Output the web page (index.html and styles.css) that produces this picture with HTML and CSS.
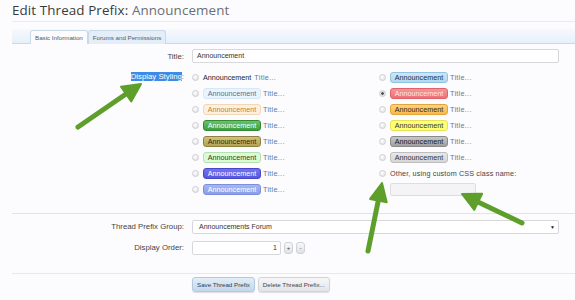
FILE: index.html
```html
<!DOCTYPE html>
<html>
<head>
<meta charset="utf-8">
<title>Edit Thread Prefix</title>
<link rel="stylesheet" href="styles.css">
</head>
<body>
<div class="page">
  <h1 class="heading">Edit Thread Prefix: <span class="heading-sub">Announcement</span></h1>
  <div class="tabs">
    <span class="tab tab-active">Basic Information</span>
    <span class="tab">Forums and Permissions</span>
  </div>
  <div class="form">
    <div class="row row-title">
      <div class="lbl">Title:</div>
      <div class="input input-wide">Announcement</div>
    </div>
    <div class="row row-styles">
      <div class="lbl lbl-top"><span class="selected">Display Styling</span><span class="colon">:</span></div>
      <div class="styles">
        <div class="col">
          <div class="opt"><span class="radio"></span><span class="plain">Announcement</span><span class="ttl">Title...</span></div>
          <div class="opt"><span class="radio"></span><span class="pill p-primary">Announcement</span><span class="ttl">Title...</span></div>
          <div class="opt"><span class="radio"></span><span class="pill p-secondary">Announcement</span><span class="ttl">Title...</span></div>
          <div class="opt"><span class="radio"></span><span class="pill p-green">Announcement</span><span class="ttl">Title...</span></div>
          <div class="opt"><span class="radio"></span><span class="pill p-olive">Announcement</span><span class="ttl">Title...</span></div>
          <div class="opt"><span class="radio"></span><span class="pill p-lightgreen">Announcement</span><span class="ttl">Title...</span></div>
          <div class="opt"><span class="radio"></span><span class="pill p-royal">Announcement</span><span class="ttl">Title...</span></div>
          <div class="opt"><span class="radio"></span><span class="pill p-skyblue">Announcement</span><span class="ttl">Title...</span></div>
        </div>
        <div class="col">
          <div class="opt"><span class="radio"></span><span class="pill p-blue">Announcement</span><span class="ttl">Title...</span></div>
          <div class="opt"><span class="radio radio-on"></span><span class="pill p-red">Announcement</span><span class="ttl">Title...</span></div>
          <div class="opt"><span class="radio"></span><span class="pill p-orange">Announcement</span><span class="ttl">Title...</span></div>
          <div class="opt"><span class="radio"></span><span class="pill p-yellow">Announcement</span><span class="ttl">Title...</span></div>
          <div class="opt"><span class="radio"></span><span class="pill p-gray">Announcement</span><span class="ttl">Title...</span></div>
          <div class="opt"><span class="radio"></span><span class="pill p-silver">Announcement</span><span class="ttl">Title...</span></div>
          <div class="opt"><span class="radio"></span><span class="other">Other, using custom CSS class name:</span></div>
          <div class="opt opt-input"><span class="input input-css"></span></div>
        </div>
      </div>
    </div>
    <div class="sep"></div>
    <div class="row row-group">
      <div class="lbl">Thread Prefix Group:</div>
      <div class="input input-wide select">Announcements Forum<span class="caret">&#9660;</span></div>
    </div>
    <div class="row row-order">
      <div class="lbl">Display Order:</div>
      <div class="spin">
        <span class="input input-num">1</span>
        <span class="spin-btn">+</span>
        <span class="spin-btn">-</span>
      </div>
    </div>
    <div class="sep sep-bottom"></div>
    <div class="row row-buttons">
      <div class="lbl"></div>
      <div class="buttons">
        <span class="btn btn-primary">Save Thread Prefix</span>
        <span class="btn">Delete Thread Prefix...</span>
      </div>
    </div>
  </div>
  <svg class="arrows" width="575" height="300" viewBox="0 0 575 300">
    <g fill="#5e9f2c" stroke="#5e9f2c" stroke-linecap="round" stroke-linejoin="round">
      <line x1="78" y1="127" x2="126" y2="94" stroke-width="5"/>
      <polygon points="141,84 121,86.7 131.2,101.5" stroke-width="2"/>
      <line x1="368" y1="251" x2="378.4" y2="200" stroke-width="5"/>
      <polygon points="382,183 370.1,198.9 386.7,202.3" stroke-width="2"/>
      <line x1="522" y1="223" x2="478" y2="202" stroke-width="5"/>
      <polygon points="462,194 482.1,193.7 474.3,209.9" stroke-width="2"/>
    </g>
  </svg>
</div>
</body>
</html>
```

FILE: styles.css
```css
* { box-sizing: border-box; }
html, body { margin: 0; padding: 0; }
body {
  background: #fcfcfe;
  font-family: "Liberation Sans", Arial, sans-serif;
  color: #333;
  width: 575px;
  height: 300px;
  overflow: hidden;
}
.page { position: relative; width: 575px; height: 300px; }

.heading {
  margin: 0 0 0 12px;
  height: 22px;
  padding: 1px 0 0 0;
  font-family: "Open Sans", "Noto Sans", sans-serif;
  font-weight: normal;
  font-size: 13.4px;
  line-height: 18px;
  color: #3a3a3a;
  border-bottom: 1px solid #e9ebf0;
  letter-spacing: 0.1px;
}
.heading-sub { color: #6b6f75; }

.tabs {
  margin: 7px 0 0 12px;
  height: 15px;
  padding: 1px 0 0 18px;
  background: linear-gradient(#f6f9fd, #e6f0fa);
  border-bottom: 1px solid #c9d9ea;
  display: flex;
  align-items: flex-end;
}
.tab {
  height: 14px;
  margin-bottom: -1px;
  padding: 0 4px;
  font-size: 6.2px;
  line-height: 13px;
  white-space: nowrap;
  color: #505862;
  border: 1px solid #c9d9ea;
  border-bottom: none;
  border-radius: 3px 3px 0 0;
  background: #e4eef9;
}
.tab-active { background: #fcfcfe; padding: 0 4px; }

.form { padding-left: 12px; }
.row {
  display: grid;
  grid-template-columns: 172px 1fr;
  column-gap: 8px;
  align-items: center;
  font-size: 7.8px;
}
.lbl { text-align: right; color: #444; }
.lbl-top { align-self: start; line-height: 16px; }
.row-title { margin-top: 5px; }
.input {
  height: 14px;
  border: 1px solid #d8d8dc;
  border-radius: 2px;
  background: #fff;
  font-size: 7px;
  line-height: 12px;
  padding: 0 4px;
  color: #333;
}
.input-wide { width: 367px; }
.select { position: relative; padding-left: 6px; }
.caret { position: absolute; right: 3px; top: 0; font-size: 5px; color: #222; }

.selected { background: #3d8be6; color: #fff; }
.colon { color: #3d6fb0; }

.row-styles { margin-top: 6px; }
.styles { display: grid; grid-template-columns: 187px 1fr; }
.col { display: flex; flex-direction: column; }
.opt {
  height: 16.1px;
  display: flex;
  align-items: center;
  font-size: 7.2px;
  white-space: nowrap;
}
.radio {
  width: 7px; height: 7px;
  border-radius: 50%;
  border: 1px solid #cfcfd3;
  background: radial-gradient(circle at 40% 35%, #fff 0, #ececef 60%, #d8d8dc 100%);
  margin-left: 0;
  margin-right: 4px;
  flex: none;
}
.radio-on { background: radial-gradient(circle, #444 0, #555 30%, #e6e6ea 45%, #d8d8dc 100%); }
.plain { color: #222; margin-right: 1px; }
.ttl { color: #5a7aa0; margin-left: 2px; letter-spacing: 0.3px; }
.pill {
  height: 11px;
  line-height: 9px;
  padding: 0 3px;
  border: 1px solid;
  border-radius: 3px;
  width: 58px;
  text-align: center;
}
.p-primary { background: #eaf4fc; border-color: #d6e8f6; color: #4a76a0; }
.p-secondary { background: #fdf0e1; border-color: #f3d6b3; color: #c0823d; }
.p-green { background: linear-gradient(#66c466, #3f9e3f); border-color: #348a34; color: #fff; }
.p-olive { background: linear-gradient(#cfc27a, #b1a453); border-color: #8f8240; color: #2a2a1a; }
.p-lightgreen { background: #dbfbd8; border-color: #b3e2b0; color: #234423; }
.p-royal { background: linear-gradient(#7373f0, #5656e0); border-color: #4747c8; color: #fff; }
.p-skyblue { background: linear-gradient(#a4b6f2, #8a9fe9); border-color: #7b8fdc; color: #fff; }
.p-blue { background: linear-gradient(#cbe7f5, #b2d9ee); border-color: #8fc3df; color: #1e3040; }
.p-red { background: linear-gradient(#f79599, #ec7076); border-color: #de6268; color: #fde8ea; }
.p-orange { background: linear-gradient(#fed27c, #f9b94c); border-color: #e5a43b; color: #3a2a10; }
.p-yellow { background: #ffff72; border-color: #e8e25a; color: #333; }
.p-gray { background: linear-gradient(#c7c7c7, #a0a0a0); border-color: #8a8a8a; color: #1a1a1a; }
.p-silver { background: linear-gradient(#e8e8e8, #d6d6d6); border-color: #bdbdbd; color: #333; }
.other { color: #444; letter-spacing: 0.15px; }
.opt-input { padding-left: 11px; }
.input-css { width: 86px; height: 13px; background: #f4f4f6; border-color: #dedee2; }

.sep { margin-top: 15px; height: 1px; background: #dfe5ec; }
.row-group { margin-top: 6px; }
.row-order { margin-top: 7px; }
.spin { display: flex; align-items: center; }
.input-num { width: 89px; text-align: right; padding-right: 3px; }
.spin-btn {
  width: 9px; height: 12px;
  margin-left: 3px;
  border: 1px solid #cfd3d8;
  border-radius: 3px;
  background: linear-gradient(#f6f7f9, #dfe2e6);
  font-size: 6px;
  line-height: 10px;
  text-align: center;
  color: #444;
}
.sep-bottom { margin-top: 18px; background: #e3ebf0; }
.row-buttons { margin-top: 3px; }
.buttons { display: flex; gap: 3px; }
.btn {
  height: 15px;
  padding: 0 4px;
  border: 1px solid #cfd4da;
  border-radius: 3px;
  background: linear-gradient(#f7f7f9, #e2e4e8);
  font-size: 6.2px;
  line-height: 13px;
  color: #444;
  box-shadow: 0 1px 1px rgba(0,0,0,0.12);
}
.btn-primary { background: linear-gradient(#e3eef8, #c3d7ec); border-color: #b5c9de; color: #2f4153; }

.arrows { position: absolute; left: 0; top: 0; pointer-events: none; }
```
